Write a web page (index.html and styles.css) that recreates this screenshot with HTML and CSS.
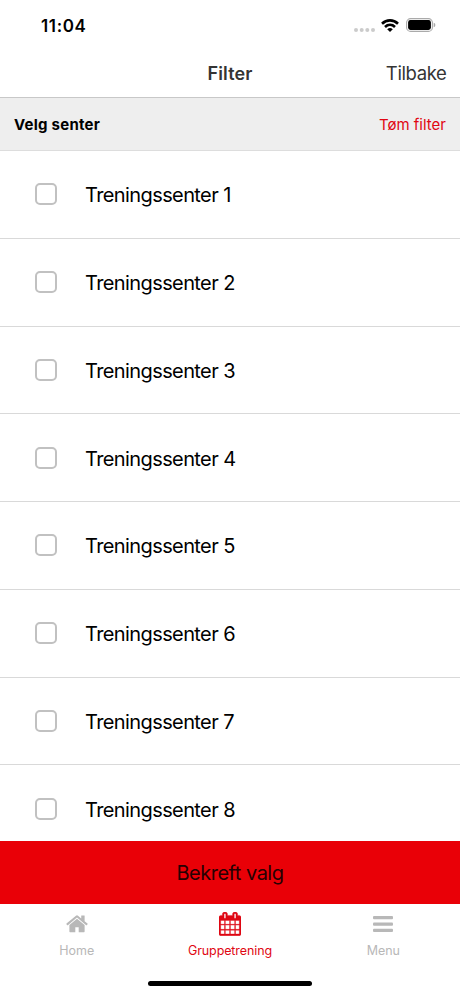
FILE: index.html
```html
<!DOCTYPE html>
<html lang="no">
<head>
<meta charset="utf-8">
<title>Filter</title>
<link rel="stylesheet" href="styles.css">
</head>
<body>
<div class="app">
  <header class="status">
    <span class="time">11:04</span>
    <div class="indicators">
      <svg class="signal" viewBox="0 0 22 4" fill="#cbcbcb"><circle cx="2" cy="2" r="2"/><circle cx="7.7" cy="2" r="2"/><circle cx="13.3" cy="2" r="2"/><circle cx="19" cy="2" r="2"/></svg>
      <svg class="wifi" viewBox="0 0 18 13" fill="none" stroke="#000" stroke-width="2.6"><path d="M1 4.700C5.600.2 12.400.2 17 4.700"/><path d="M4 8C6.900 5.200 11.100 5.200 14 8"/><path d="M9 12.900 6.200 10.200Q9 7.800 11.800 10.200Z" fill="#000" stroke="none"/></svg>
      <svg class="battery" viewBox="0 0 30 14"><rect x=".6" y=".6" width="25.8" height="12.8" rx="4" fill="none" stroke="#aaa" stroke-width="1.1"/><rect x="2.1" y="2.1" width="22.8" height="9.800" rx="2.300"/><path d="M27.700 4.800q1.700.5 1.700 2.200t-1.700 2.200z" fill="#aaa"/></svg>
    </div>
  </header>
  <nav class="navbar"><span></span><h1>Filter</h1><span class="back">Tilbake</span></nav>
  <div class="section"><h2>Velg senter</h2><span class="clear">Tøm filter</span></div>
  <main class="list">
    <div class="row"><i class="box"></i><span>Treningssenter 1</span></div>
    <div class="row"><i class="box"></i><span>Treningssenter 2</span></div>
    <div class="row"><i class="box"></i><span>Treningssenter 3</span></div>
    <div class="row"><i class="box"></i><span>Treningssenter 4</span></div>
    <div class="row"><i class="box"></i><span>Treningssenter 5</span></div>
    <div class="row"><i class="box"></i><span>Treningssenter 6</span></div>
    <div class="row"><i class="box"></i><span>Treningssenter 7</span></div>
    <div class="row"><i class="box"></i><span>Treningssenter 8</span></div>
  </main>
  <div class="confirm"><span>Bekreft valg</span></div>
  <footer class="tabs">
    <div class="tab">
      <svg class="home" viewBox="0 0 1664 1792"><path d="M1408 992v480q0 26-19 45t-45 19h-384v-384h-256v384h-384q-26 0-45-19t-19-45v-480q0-1 .5-3t.5-3l575-474 575 474q1 2 1 6zM1631 923l-62 74q-8 9-21 11h-3q-13 0-21-7l-692-577-692 577q-12 8-24 7-13-2-21-11l-62-74q-8-10-7-23.500t11-21.500l719-599q32-26 76-26t76 26l244 204v-195q0-14 9-23t23-9h192q14 0 23 9t9 23v408l219 182q10 8 11 21.500t-7 23.500z"/></svg>
      <span>Home</span>
    </div>
    <div class="tab active">
      <svg class="calendar" viewBox="0 0 1664 1792"><path d="M128 1664h288v-288h-288v288zM480 1664h320v-288h-320v288zM128 1312h288v-320h-288v320zM480 1312h320v-320h-320v320zM128 928h288v-288h-288v288zM864 1664h320v-288h-320v288zM480 928h320v-288h-320v288zM1248 1664h288v-288h-288v288zM864 1312h320v-320h-320v320zM512 448v-288q0-13-9.500-22.500t-22.500-9.500h-64q-13 0-22.500 9.500t-9.500 22.500v288q0 13 9.500 22.500t22.500 9.500h64q13 0 22.500-9.500t9.500-22.500zM1248 1312h288v-320h-288v320zM864 928h320v-288h-320v288zM1248 928h288v-288h-288v288zM1280 448v-288q0-13-9.500-22.500t-22.500-9.500h-64q-13 0-22.500 9.500t-9.500 22.500v288q0 13 9.500 22.500t22.500 9.500h64q13 0 22.500-9.500t9.500-22.500zM1664 384v1280q0 52-38 90t-90 38h-1408q-52 0-90-38t-38-90v-1280q0-52 38-90t90-38h128v-96q0-66 47-113t113-47h64q66 0 113 47t47 113v96h384v-96q0-66 47-113t113-47h64q66 0 113 47t47 113v96h128q52 0 90 38t38 90z" fill-rule="evenodd"/></svg>
      <span>Gruppetrening</span>
    </div>
    <div class="tab">
      <svg class="bars" viewBox="0 0 20 17"><rect y="0" width="20" height="3.300" rx="1"/><rect y="6.400" width="20" height="3.300" rx="1"/><rect y="12.800" width="20" height="3.300" rx="1"/></svg>
      <span>Menu</span>
    </div>
  </footer>
  <div class="home-indicator"></div>
</div>
</body>
</html>
```
FILE: styles.css
```css
* { box-sizing: border-box; }
body { margin: 0; background: #fff; color: #000; font-family: Inter, "Liberation Sans", sans-serif; }
h1, h2 { margin: 0; }
.app { width: 460px; height: 996px; display: flex; flex-direction: column; overflow: hidden; }
.status { height: 50px; flex: none; display: flex; justify-content: space-between; padding: 0 24px 0 41px; }
.time { font-size: 17px; line-height: 20px; font-weight: 600; letter-spacing: .65px; margin-top: 16px; }
.indicators { display: flex; align-items: flex-start; }
.signal { width: 22px; height: 4px; margin: 28px 5px 0 0; }
.wifi { width: 18px; height: 13px; margin: 19px 7px 0 0; }
.battery { width: 30px; height: 14px; margin-top: 18px; }
.navbar { height: 48px; flex: none; display: grid; grid-template-columns: 1fr auto 1fr; align-items: center; padding: 0 14px; border-bottom: 1px solid #c8c8c8; color: #343434; }
.navbar h1 { font-size: 18px; line-height: 24px; font-weight: 600; letter-spacing: .15px; }
.back { justify-self: end; font-size: 18.500px; line-height: 22px; letter-spacing: -.4px; margin-right: -.4px; padding-bottom: 1px; }
.section { height: 53px; flex: none; display: flex; align-items: center; justify-content: space-between; padding: 0 14px; background: #eee; border-bottom: 1px solid #ddd; }
.section h2 { font-size: 15px; font-weight: 700; letter-spacing: .25px; }
.clear { font-size: 15px; color: #e10612; }
.list { height: 689.500px; flex: none; overflow: hidden; }
.row { height: 87.750px; display: flex; align-items: center; padding-left: 35px; border-bottom: 1px solid #d9d9d9; font-size: 20px; letter-spacing: -.6px; }
.row span { padding-top: 2px; }
.box { width: 22px; height: 22px; margin-right: 28px; border: 2px solid #c1c1c1; border-radius: 5px; }
.confirm { height: 63.500px; flex: none; display: flex; align-items: center; justify-content: center; padding-top: 1px; background: #e90007; color: #260002; font-size: 20px; letter-spacing: -.5px; }
.tabs { height: 68px; flex: none; display: grid; grid-template-columns: repeat(3, 1fr); }
.tab { display: flex; flex-direction: column; align-items: center; justify-content: space-between; height: 55px; padding-top: 8px; color: #b8b8b8; font-size: 12.500px; line-height: 16px; }
.tab svg { fill: currentColor; }
.active { color: #df0713; }
.active span { letter-spacing: -.1px; }
.home { width: 22px; height: 23.700px; }
.calendar { width: 22px; height: 23.700px; stroke: currentColor; stroke-width: 26px; }
.bars { width: 20px; height: 17px; margin-top: 4px; }
.home-indicator { width: 164px; height: 5px; flex: none; align-self: center; margin-top: 9px; border-radius: 3px; background: #000; }
```
